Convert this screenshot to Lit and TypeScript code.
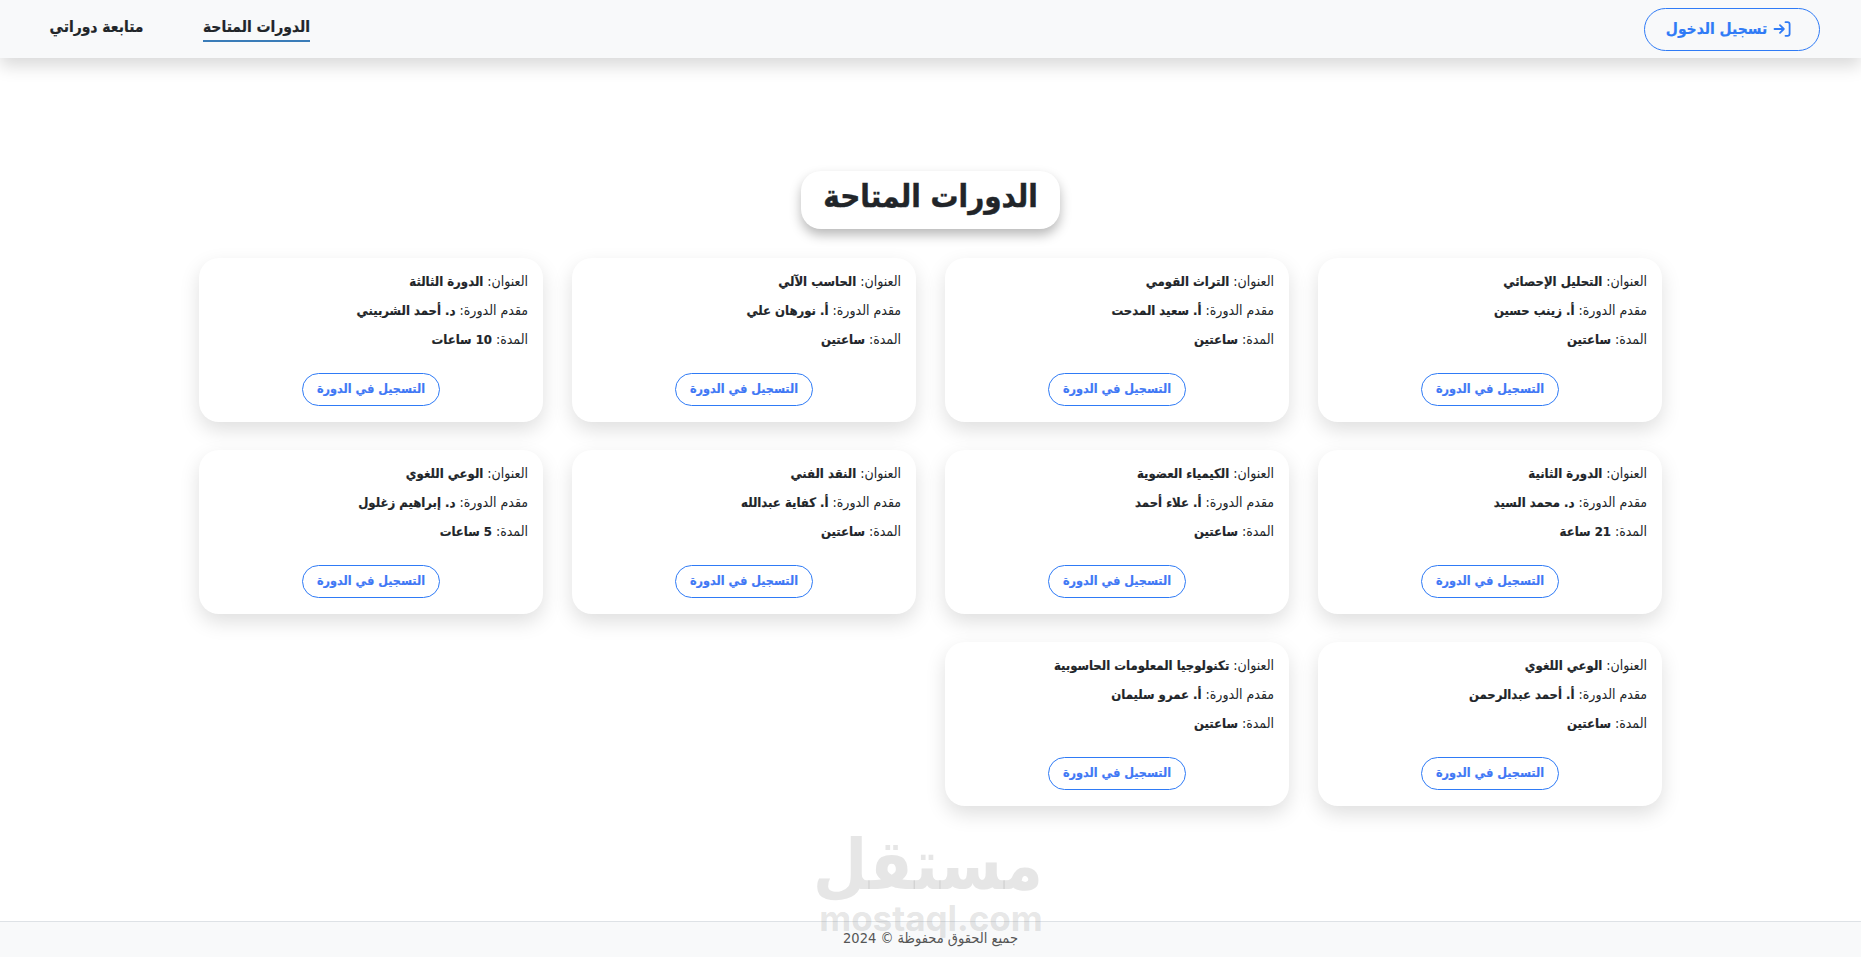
import { LitElement, html, css } from "lit";
import { customElement } from "lit/decorators.js";

const courses = [
  ["التحليل الإحصائي", "أ. زينب حسين", "ساعتين"],
  ["التراث القومي", "أ. سعيد المدحت", "ساعتين"],
  ["الحاسب الآلي", "أ. نورهان علي", "ساعتين"],
  ["الدورة الثالثة", "د. أحمد الشربيني", "10 ساعات"],
  ["الدورة الثانية", "د. محمد السيد", "21 ساعة"],
  ["الكيمياء العضوية", "أ. علاء أحمد", "ساعتين"],
  ["النقد الفني", "أ. كفاية عبدالله", "ساعتين"],
  ["الوعي اللغوي", "د. إبراهيم زغلول", "5 ساعات"],
  ["الوعي اللغوي", "أ. أحمد عبدالرحمن", "ساعتين"],
  ["تكنولوجيا المعلومات الحاسوبية", "أ. عمرو سليمان", "ساعتين"],
];

@customElement("app-root")
export class AppRoot extends LitElement {
  static styles = css`
    :host {
      display: flex;
      flex-direction: column;
      position: relative;
      height: 957px;
      overflow: hidden;
      background: #fff;
      color: #212529;
      font-family: "DejaVu Sans Condensed", "DejaVu Sans", sans-serif;
    }
    .nav {
      flex: none;
      height: 58px;
      box-sizing: border-box;
      background: #f8f9fa;
      box-shadow: 0 8px 16px rgba(0, 0, 0, 0.15);
      display: flex;
      justify-content: space-between;
      align-items: center;
      padding: 0 41px 0 48px;
    }
    .links { display: flex; gap: 58px; align-items: center; margin-top: -3px; }
    .link {
      font-size: 15.5px;
      font-weight: 700;
      color: #212529;
      width: 97px;
      padding: 5px 0 4px;
      white-space: nowrap;
      border-bottom: 2px solid transparent;
      display: flex;
      justify-content: center;
      -webkit-text-stroke: 0.2px currentColor;
    }
    .link.active { width: 107px; border-bottom-color: #3a7cb8; }
    .login {
      width: 176px;
      height: 43px;
      box-sizing: border-box;
      border: 1px solid #2f7bf6;
      border-radius: 22px;
      padding-right: 7px;
      color: #2f7bf6;
      font-size: 15.5px;
      font-weight: 700;
      display: flex;
      align-items: center;
      justify-content: center;
      gap: 6px;
      direction: rtl;
      -webkit-text-stroke: 0.2px currentColor;
    }
    .login svg { width: 18px; height: 16px; flex: none; }
    main { flex: 1; display: flex; flex-direction: column; align-items: center; padding-top: 113px; }
    h1 {
      margin: 0;
      width: 259px;
      height: 58px;
      box-sizing: border-box;
      padding-bottom: 8px;
      display: flex;
      align-items: center;
      justify-content: center;
      background: #fff;
      border-radius: 20px;
      font-size: 31px;
      font-weight: 700;
      white-space: nowrap;
      box-shadow: 0 6px 12px rgba(0, 0, 0, 0.28);
      color: #212529;
      -webkit-text-stroke: 0.4px currentColor;
    }
    .grid {
      margin-top: 29px;
      display: grid;
      grid-template-columns: repeat(4, 344px);
      gap: 28px 29px;
      direction: rtl;
    }
    .card {
      height: 164px;
      box-sizing: border-box;
      padding: 13px 15px 16px;
      border-radius: 20px;
      background: #fff;
      box-shadow: 0 8px 20px rgba(0, 0, 0, 0.13);
      display: flex;
      flex-direction: column;
    }
    .row { height: 29px; font-size: 14px; line-height: 20px; color: #212529; white-space: nowrap; }
    .row b { font-weight: 700; font-size: 13px; -webkit-text-stroke: 0.2px currentColor; }
    .enrol {
      margin-top: auto;
      align-self: center;
      width: 138px;
      height: 33px;
      box-sizing: border-box;
      border: 1px solid #2f7bf6;
      border-radius: 17px;
      padding-bottom: 2px;
      color: #3f78f5;
      font-size: 12.5px;
      font-weight: 700;
      display: flex;
      align-items: center;
      justify-content: center;
      white-space: nowrap;
      -webkit-text-stroke: 0.2px currentColor;
    }
    footer {
      flex: none;
      height: 36px;
      box-sizing: border-box;
      background: #f8f9fa;
      border-top: 1px solid #dee2e6;
      padding-bottom: 3px;
      font-size: 14.5px;
      color: #555;
      display: flex;
      align-items: center;
      justify-content: center;
      direction: rtl;
    }
    .mark {
      position: absolute;
      left: 819px;
      top: 825px;
      width: 224px;
      text-align: center;
      color: rgba(150, 150, 150, 0.24);
      pointer-events: none;
      line-height: 1;
    }
    .mark .ar { font-size: 70px; font-weight: 700; line-height: 80px; white-space: nowrap; }
    .mark .en { font-family: "Inter", sans-serif; font-size: 35px; font-weight: 700; line-height: 32px; margin-top: -3px; }
  `;

  render() {
    return html`
      <div class="nav">
        <div class="links">
          <span class="link" dir="rtl">متابعة دوراتي</span>
          <span class="link active" dir="rtl">الدورات المتاحة</span>
        </div>
        <div class="login">
          <svg viewBox="0 0 18 16" fill="none" stroke="currentColor" stroke-width="1.8" stroke-linecap="round" stroke-linejoin="round">
            <path d="M1.5 8H10.5M7 4.2 10.8 8 7 11.8" />
            <path d="M12.5 1.2H14.5Q16.6 1.2 16.6 3.3V12.7Q16.6 14.8 14.5 14.8H12.5" />
          </svg>
          <span>تسجيل الدخول</span>
        </div>
      </div>
      <main>
        <h1 dir="rtl">الدورات المتاحة</h1>
        <div class="grid">
          ${courses.map(
            (c) => html`
              <div class="card">
                <div class="row">العنوان: <b>${c[0]}</b></div>
                <div class="row">مقدم الدورة: <b>${c[1]}</b></div>
                <div class="row">المدة: <b>${c[2]}</b></div>
                <div class="enrol">التسجيل في الدورة</div>
              </div>
            `
          )}
        </div>
      </main>
      <footer>جميع الحقوق محفوظة © 2024</footer>
      <div class="mark">
        <div class="ar" dir="rtl">مستقل</div>
        <div class="en">mostaql.com</div>
      </div>
    `;
  }
}
